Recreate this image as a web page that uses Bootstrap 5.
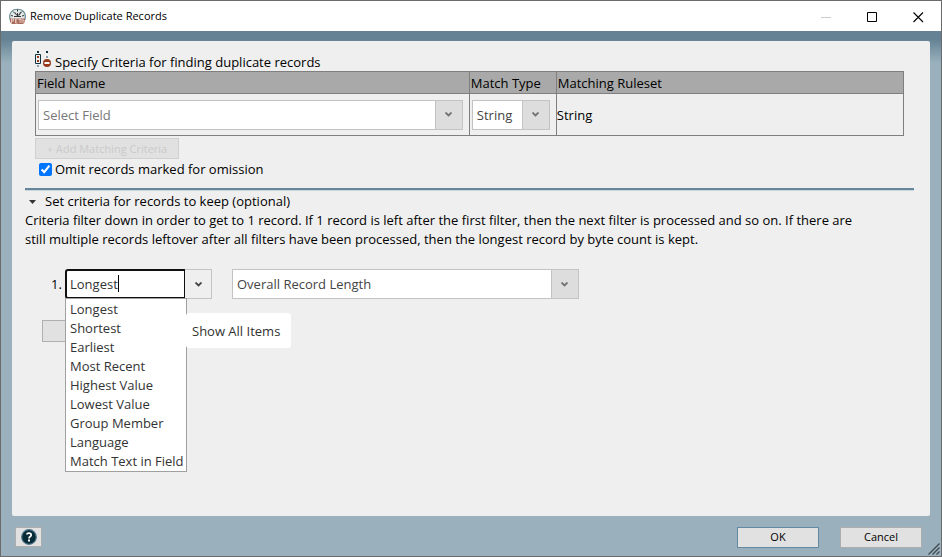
<!DOCTYPE html>
<html lang="en">
<head>
<meta charset="utf-8">
<meta name="viewport" content="width=device-width, initial-scale=1">
<title>Remove Duplicate Records</title>
<link href="https://cdn.jsdelivr.net/npm/bootstrap@5.3.0/dist/css/bootstrap.min.css" rel="stylesheet">
<style>
body{font-family:"Open Sans","Noto Sans",sans-serif;font-size:13px;line-height:19px;color:#000}
.dialog-frame{border:1px solid #6b6b6b;background:#9ab1bd}
.titlebar{height:30px;padding-left:8px;font-size:11px;line-height:16px}
.titlebar-text{margin-left:4px}
.win-btn{width:46px;height:30px;border:0;background:none;padding:0}
.dialog-body{background:linear-gradient(#648293,#648293 8px,#9ab1bd 32px);padding:10px 11px 0}
.panel{background:#efefef;border-radius:2px;padding:10px 16px 10px 13px}
.criteria-block{padding:0 10px}
.criteria-title{height:20px;gap:4px;line-height:17px}
.criteria-table{table-layout:fixed;border-collapse:collapse;width:100%;border:1px solid #7f7f7f}
.criteria-table th{background:#a9a9a9;font-weight:400;height:22px;padding:1px 1px 0;border:1px solid #7f7f7f}
.criteria-table td{height:42px;padding:0;border:1px solid #7f7f7f;vertical-align:middle}
.criteria-table .rule-cell{padding-top:2px}
.criteria-table .field-cell{padding:0 6px 0 2px}
.col-type{width:87px}
.col-rule{width:40%}
.combo{appearance:none;width:100%;height:30px;border:1px solid #c3c3c3;border-radius:0;padding:1px 28px 0 4px;opacity:1;color:#444;
background:url("data:image/svg+xml,%3Csvg xmlns='http://www.w3.org/2000/svg' width='7' height='5'%3E%3Cpath d='M.5 .5L3.5 3.5L6.5 .5' fill='none' stroke='%23707070' stroke-width='1.8'/%3E%3C/svg%3E") no-repeat right 10px center,linear-gradient(90deg,#c3c3c3 1px,#ddd 1px) no-repeat right/27px 100%,#fff}
.combo-empty{color:#777}
.combo-type{width:78px}
.combo-rank{width:347px}
.add-btn{width:144px;height:21px;margin-top:2px;font-size:11px;line-height:16px;padding:0;border:1px solid #d0d0d0;background:#e1e1e1;color:#cacaca}
.omit-row{height:20px;padding-left:4px;gap:3px;margin-bottom:9px}
.omit-row input{width:13px;height:13px;margin:0;accent-color:#0075ff}
.rule-line{height:3px;background:linear-gradient(#66879b 2px,#cbd5dc 2px)}
.toggle-btn{border:0;background:none;padding:1px 0 0 4px;height:20px;gap:9px}
.help-text{max-width:850px}
.rank-row{margin-top:20px;padding-left:26px}
.rank-number{width:14px}
.rank-box{width:147px;margin-right:20px}
.rank-input{width:120px;height:30px;border:2px solid #101010;border-right-width:1px;border-radius:3px 0 0 3px;padding:0 3px;outline:0;color:#333}
.caret-line{left:53px;top:6px;width:1px;height:17px;background:#000}
.rank-arrow{width:27px;height:30px;border:1px solid #c3c3c3;border-left:0;background:#efefef;padding:0}
.options{top:29px;left:0;width:122px;border:1px solid #a0a0a0;background:#fff;color:#333;z-index:2;padding-top:1px}
.options li{padding-left:4px;white-space:nowrap}
.hint{top:44px;left:121px;height:35px;width:105px;border-radius:3px;background:#fff;color:#333;z-index:3;padding:9px 0 0 6px;white-space:nowrap}
.covered-btn{width:120px;height:22px;margin:21px 0 0 17px;border:1px solid #b0b0b0;background:#e1e1e1;padding:0}
.dialog-footer{height:40px;padding:10px 19px 8px 14px;gap:21px;font-size:11px;line-height:16px}
.foot-btn{width:82px;height:21px;background:#e1e1e1;border:1px solid #adadad;padding:0;color:#000}
.foot-btn.primary{border-color:#6489a3}
.help-btn{width:27px;height:20px;background:#e1e1e1;border:1px solid #adadad;padding:0}
.grip{right:1px;bottom:1px}
</style>
<script src="https://cdn.jsdelivr.net/npm/bootstrap@5.3.0/dist/js/bootstrap.bundle.min.js"></script>
</head>
<body>
<div class="dialog-frame vh-100 d-flex flex-column position-relative">
  <header class="titlebar bg-white d-flex align-items-center">
    <svg width="17" height="17" viewBox="0 0 17 17" aria-hidden="true">
      <path d="M1.500 12.500C0 9 .5 6 2.500 3.500 5 .5 12 .5 14.500 3.500c2 2.500 2.500 5.500 1 9z" fill="#e4eaea" stroke="#6b8f96" stroke-width="1.200"/>
      <path d="M4 3.500l2 2M8.500 1.500v2M13 3.500l-2 2M2 7.500l2 .5M15 7.500l-2 .5M6 4.500l1.500 2.500h3l1-3M5 8.500h7M8.500 5v3" stroke="#333" stroke-width="1" fill="none"/>
      <path d="M1 10.500h15v3.500l-2 2H3l-2-2z" fill="#a8695a"/>
      <path d="M2.500 15v-4h2v2h-2M6.500 11v4h2M6.500 13h1.500M6.500 11h2M9.500 11.500h3M11 11.500V15M13 15v-3h2v3" stroke="#f3ddd6" stroke-width=".8" fill="none"/>
    </svg>
    <span class="titlebar-text me-auto">Remove Duplicate Records</span>
    <button class="win-btn" type="button" aria-label="Minimize" disabled><svg width="11" height="11"><path d="M0 5.500h10" stroke="#ccc"/></svg></button>
    <button class="win-btn" type="button" aria-label="Maximize"><svg width="11" height="11"><path d="M.5 .5h9v9h-9z" fill="none" stroke="#000"/></svg></button>
    <button class="win-btn" type="button" aria-label="Close"><svg width="11" height="11"><path d="M.5 .5l9.500 9.500M10 .5l-9.500 9.500" stroke="#000" stroke-width="1.100"/></svg></button>
  </header>

  <main class="dialog-body flex-grow-1 d-flex flex-column">
    <div class="panel flex-grow-1">
      <section class="criteria-block">
        <div class="criteria-title d-flex align-items-end">
          <svg class="align-self-start" width="16" height="17" viewBox="0 0 16 17" aria-hidden="true">
            <path d="M2 0h2v2H2zM11 0h2v2h-2z" fill="#10333d"/>
            <path d="M.5 3.500h5v9h-5z" fill="#efefef" stroke="#10333d"/>
            <path d="M2 5h2v2H2zM2 9h2v2H2z" fill="#963a1b"/>
            <path d="M2 14h2v2H2zM11 5h2v2h-2z" fill="#88a2ae"/>
            <circle cx="12" cy="12" r="4" fill="#963a1b"/><path d="M9.500 11h5v2h-5z" fill="#fff"/>
          </svg>
          <span>Specify Criteria for finding duplicate records</span>
        </div>
        <table class="criteria-table">
          <colgroup><col><col class="col-type"><col class="col-rule"></colgroup>
          <thead><tr><th>Field Name</th><th>Match Type</th><th>Matching Ruleset</th></tr></thead>
          <tbody><tr>
            <td class="field-cell"><select class="combo combo-empty d-block" aria-label="Field Name"><option>Select Field</option></select></td>
            <td class="field-cell"><select class="combo combo-type d-block" aria-label="Match Type"><option>String</option></select></td>
            <td class="rule-cell">String</td>
          </tr></tbody>
        </table>
        <button class="add-btn d-block" type="button" disabled>+ Add Matching Criteria</button>
        <div class="omit-row d-flex align-items-center">
          <input type="checkbox" id="omit" checked><label for="omit">Omit records marked for omission</label>
        </div>
      </section>
      <div class="rule-line"></div>
      <button class="toggle-btn d-flex align-items-center" type="button" data-bs-toggle="collapse" data-bs-target="#keep" aria-expanded="true" aria-controls="keep">
        <svg width="7" height="4" aria-hidden="true"><path d="M0 0h7L3.500 4z" fill="#333"/></svg>
        <span>Set criteria for records to keep (optional)</span>
      </button>
      <section id="keep" class="collapse show">
        <p class="help-text mb-0">Criteria filter down in order to get to 1 record. If 1 record is left after the first filter, then the next filter is processed and so on. If there are still multiple records leftover after all filters have been processed, then the longest record by byte count is kept.</p>
        <div class="rank-row d-flex align-items-center">
          <label class="rank-number" for="rank">1.</label>
          <div class="rank-box position-relative d-flex">
            <input class="rank-input" id="rank" type="text" value="Longest" role="combobox" aria-expanded="true" aria-controls="rank-options">
            <span class="caret-line position-absolute"></span>
            <button class="rank-arrow" type="button" aria-label="Show All Items"><svg class="d-block mx-auto" width="7" height="5"><path d="M.5 .5l3 3 3-3" fill="none" stroke="#444" stroke-width="1.800"/></svg></button>
            <ul class="options position-absolute list-unstyled mb-0" id="rank-options">
              <li>Longest</li><li>Shortest</li><li>Earliest</li><li>Most Recent</li><li>Highest Value</li><li>Lowest Value</li><li>Group Member</li><li>Language</li><li>Match Text in Field</li>
            </ul>
            <div class="hint position-absolute" role="tooltip">Show All Items</div>
          </div>
          <select class="combo combo-rank" aria-label="Ranking field"><option>Overall Record Length</option></select>
        </div>
        <button class="covered-btn d-block" type="button" aria-label="Add filter"></button>
      </section>
    </div>
  </main>

  <footer class="dialog-footer d-flex align-items-center">
    <button class="help-btn me-auto" type="button" aria-label="Help">
      <svg class="d-block mx-auto" width="16" height="16" viewBox="0 0 16 16"><circle cx="8" cy="8" r="7.300" fill="#082c37" stroke="#4d7388" stroke-width="1.200"/><path d="M5.800 5.500C6 3.500 10.200 3.500 10.200 6c0 1.600-2.200 1.500-2.200 3.500" fill="none" stroke="#fff" stroke-width="1.700"/><path d="M7 10.600h2v2H7z" fill="#fff"/></svg>
    </button>
    <button class="foot-btn primary" type="button">OK</button>
    <button class="foot-btn" type="button">Cancel</button>
  </footer>
  <svg class="grip position-absolute" width="12" height="12" aria-hidden="true"><path d="M.5 11.500l11-11M4.500 11.500l7-7M8.500 11.500l3-3" stroke="#3c454a" stroke-width="1.200"/></svg>
</div>
</body>
</html>
